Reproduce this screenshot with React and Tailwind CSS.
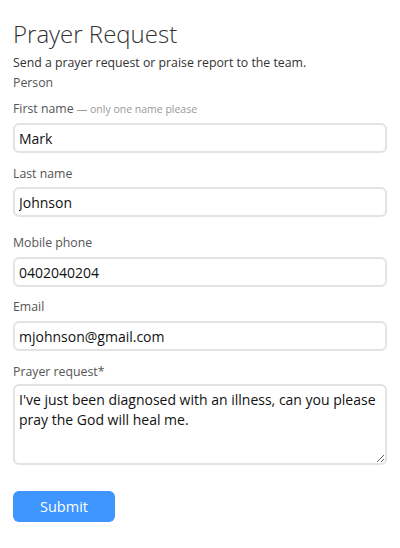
export default function App() {
  const inputCls =
    "block w-full h-[30px] rounded-[6px] border-2 border-[#e3e3e3] bg-white px-[4px] text-[14px] text-[#111] outline-none";
  const labelCls = "block text-[12.3px] leading-[20px] text-[#555]";

  return (
    <div
      className="min-h-screen w-full bg-white px-[13px] pt-[18px] text-[#333]"
      style={{ fontFamily: '"Open Sans", "Noto Sans", sans-serif' }}
    >
      <h1 className="text-[24px] font-light leading-[32px] text-[#333]">Prayer Request</h1>
      <p className="mt-[3px] text-[12.3px] leading-[20px] text-[#333]">
        Send a prayer request or praise report to the team.
      </p>
      <p className="text-[12.3px] leading-[20px] text-[#555]">Person</p>

      <form className="mt-[6px]" onSubmit={(e) => e.preventDefault()}>
        <label className={labelCls}>
          First name <span className="text-[10.5px] leading-[20px] text-[#999]">— only one name please</span>
        </label>
        <input className={`${inputCls} mt-[4px]`} defaultValue="Mark" />

        <label className={`${labelCls} mt-[11px]`}>Last name</label>
        <input className={`${inputCls} mt-[3px]`} defaultValue="Johnson" />

        <label className={`${labelCls} mt-[16px]`}>Mobile phone</label>
        <input className={`${inputCls} mt-[4px]`} defaultValue="0402040204" />

        <label className={`${labelCls} mt-[10px]`}>Email</label>
        <input className={`${inputCls} mt-[4px]`} defaultValue="mjohnson@gmail.com" />

        <label className={`${labelCls} mt-[11px]`}>Prayer request*</label>
        <textarea
          className="mt-[2px] block h-[81px] w-full rounded-[6px] border-2 border-[#e3e3e3] bg-white px-[4px] pt-[4px] text-[14px] leading-[20px] text-[#111] outline-none"
          defaultValue="I've just been diagnosed with an illness, can you please pray the God will heal me."
        />

        <button
          type="submit"
          className="mt-[26px] h-[31px] w-[102px] rounded-[6px] bg-[#3d95fd] text-[14.5px] text-white"
        >
          Submit
        </button>
      </form>
    </div>
  );
}
